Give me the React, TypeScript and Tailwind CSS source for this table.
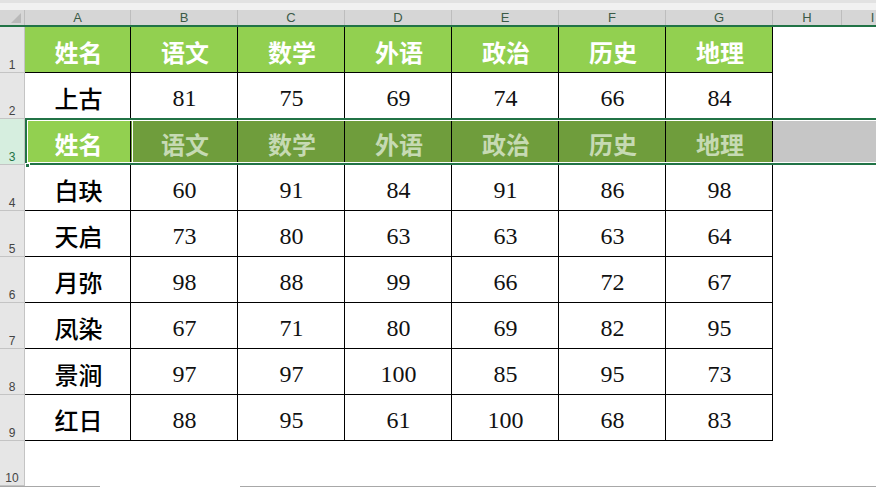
import React from "react";

const cols = ["A", "B", "C", "D", "E", "F", "G", "H", "I"];
const colW = [106, 107, 107, 107, 107, 107, 107, 69, 62];
const heads = ["姓名", "语文", "数学", "外语", "政治", "历史", "地理"];

const data: [string, number[]][] = [
  ["白玦", [60, 91, 84, 91, 86, 98]],
  ["天启", [73, 80, 63, 63, 63, 64]],
  ["月弥", [98, 88, 99, 66, 72, 67]],
  ["凤染", [67, 71, 80, 69, 82, 95]],
  ["景涧", [97, 97, 100, 85, 95, 73]],
  ["红日", [88, 95, 61, 100, 68, 83]],
];

const cjk = { fontFamily: '"Noto Sans CJK SC", "Noto Sans", sans-serif' };
const serif = { fontFamily: '"Liberation Serif", "Noto Sans CJK SC", serif' };
const ui = { fontFamily: '"Liberation Sans", Arial, sans-serif' };

function RowNum({ n, active }: { n: number; active?: boolean }) {
  return (
    <div
      className={`w-[25px] shrink-0 h-full flex items-end justify-center pb-[1px] text-[12px] leading-none border-b border-r border-[#c4c4c4] ${
        active ? "bg-[#d6eedf] text-[#217346]" : "bg-[#e6e6e6] text-[#444]"
      }`}
      style={ui}
    >
      {n}
    </div>
  );
}

function HeaderRow({ dark }: { dark?: boolean }) {
  return (
    <>
      {heads.map((h, i) => {
        const selFill = dark && i > 0;
        return (
          <div
            key={i}
            className={`shrink-0 h-full flex items-center justify-center pt-[5px] pl-[2px] text-[24px] font-bold border-r border-b border-black ${
              selFill ? "bg-[#6f9d3c] text-[#c6dab3]" : "bg-[#92d050] text-white"
            }`}
            style={{ ...cjk, width: colW[i] }}
          >
            {h}
          </div>
        );
      })}
    </>
  );
}

function DataRow({ name, vals }: { name: string; vals: number[] }) {
  return (
    <>
      <div
        className="shrink-0 h-full flex items-center justify-center pt-[5px] pl-[2px] text-[24px] font-medium text-black border-r border-b border-black bg-white"
        style={{ ...cjk, width: colW[0] }}
      >
        {name}
      </div>
      {vals.map((v, i) => (
        <div
          key={i}
          className="shrink-0 h-full flex items-center justify-center pt-[5px] pl-[1px] text-[24px] text-[#111] border-r border-b border-black bg-white"
          style={{ ...serif, width: colW[i + 1] }}
        >
          {v}
        </div>
      ))}
    </>
  );
}

export default function App() {
  return (
    <div className="relative w-[876px] h-[487px] overflow-hidden bg-white flex flex-col">
      {/* top strip */}
      <div className="h-[10px] shrink-0 bg-[#f1f1f1] border-t-[3px] border-[#e2e2e2]" />
      {/* column header */}
      <div className="h-[17px] shrink-0 flex bg-[#d6d6d6] border-b-2 border-[#217346]">
        <div className="w-[25px] shrink-0 relative bg-[#d6d6d6] border-r border-[#bdbdbd]">
          <div className="absolute right-[3px] bottom-[2px] w-0 h-0 border-l-[10px] border-l-transparent border-b-[10px] border-b-[#b9b9b9]" />
        </div>
        {cols.map((c, i) => (
          <div
            key={c}
            className="shrink-0 h-full flex items-center justify-center text-[13px] leading-none text-[#3b5a46] border-r border-[#bdbdbd]"
            style={{ ...ui, width: colW[i] }}
          >
            {c}
          </div>
        ))}
      </div>

      {/* row 1 */}
      <div className="h-[46px] shrink-0 flex">
        <RowNum n={1} />
        <HeaderRow />
      </div>
      {/* row 2 */}
      <div className="h-[46px] shrink-0 flex">
        <RowNum n={2} />
        <DataRow name="上古" vals={[81, 75, 69, 74, 66, 84]} />
      </div>
      {/* row 3 selected */}
      <div className="h-[46px] shrink-0 flex relative">
        <RowNum n={3} active />
        <HeaderRow dark />
        <div className="flex-1 h-full bg-[#c6c6c6]" />
        {/* selection overlay */}
        <div className="absolute left-[25px] right-0 top-[-1px] bottom-[0px] border-t-2 border-b-2 border-l-2 border-[#217346] pointer-events-none">
          <div className="absolute inset-0 border-t border-b border-white" />
          <div className="absolute left-0 top-0 bottom-0 w-[106px] border border-white" />
        </div>
        <div className="absolute left-[25px] bottom-[-3px] w-[5px] h-[5px] bg-[#217346] border border-white" />
      </div>
      {data.map(([n, v], i) => (
        <div key={n} className="h-[46px] shrink-0 flex">
          <RowNum n={i + 4} />
          <DataRow name={n} vals={v} />
        </div>
      ))}
      {/* row 10 */}
      <div className="h-[45px] shrink-0 flex">
        <RowNum n={10} />
      </div>
      {/* bottom edge */}
      <div className="h-[1px] shrink-0 flex">
        <div className="w-[100px] bg-[#a8a8a8]" />
        <div className="w-[140px] bg-white" />
        <div className="flex-1 bg-[#a8a8a8]" />
      </div>
    </div>
  );
}
